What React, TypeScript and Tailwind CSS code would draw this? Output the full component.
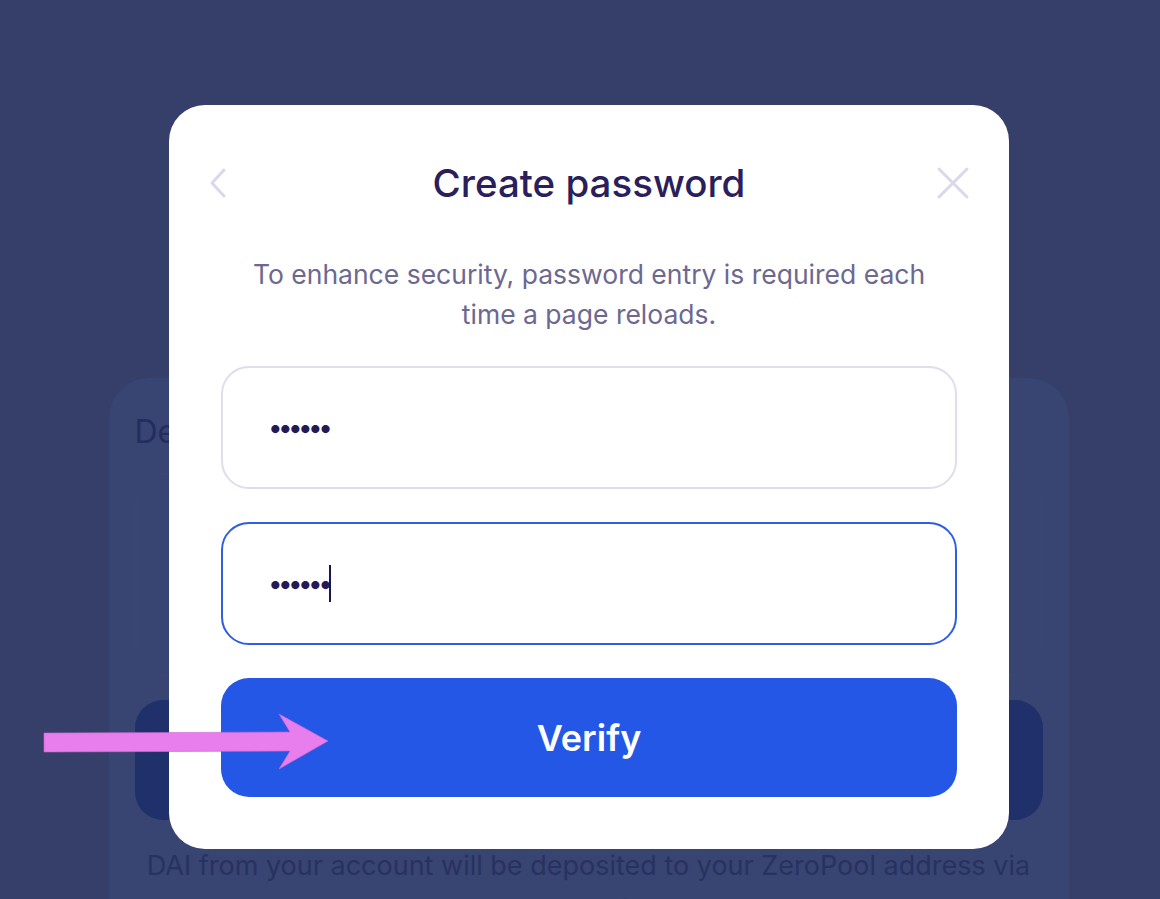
function BackgroundPage() {
  return (
    <div className="flex flex-col items-center pl-[17px] pt-[378px]">
      <div className="w-[960px] rounded-[40px] bg-[#384471] px-[26px] pt-[34px] pb-10">
        <h2 className="text-[32px] leading-[40px] text-[#242d5d]">Deposit</h2>
        <div className="mt-[21px] h-[203px] rounded-[28px] border-2 border-[#3a4573]" />
        <div className="mt-[24px] h-[120px] rounded-[28px] bg-[#20306a]" />
        <p className="mt-[24px] text-center text-[27px] leading-[44px] text-[#283260]">
          DAI from your account will be deposited to your ZeroPool address via
          <br />a permit.
        </p>
      </div>
    </div>
  )
}

function PasswordField({ focused }: { focused?: boolean }) {
  return (
    <div
      className={`flex h-[123px] items-center rounded-[28px] border-2 pl-[45px] ${
        focused ? "border-[#2f5ee3]" : "border-[#dfddee]"
      }`}
    >
      <span className="text-[26px] tracking-[-4.6px] text-[#231a55]">••••••</span>
      {focused && <span className="ml-[1px] h-[37px] w-[2px] bg-[#1c1650]" />}
    </div>
  )
}

function PasswordModal() {
  return (
    <div className="absolute inset-0 flex items-start justify-center pl-[18px] pt-[105px]">
      <div className="w-[840px] rounded-[36px] bg-white px-[52px] pt-[56px] pb-[52px]">
        {/* Header */}
        <div className="grid grid-cols-[1fr_auto_1fr] items-center">
          <svg className="-ml-[13px]" width="20" height="32" viewBox="0 0 20 32" fill="none">
            <path d="M16 3 L4 16 L16 29" stroke="#dad8ea" strokeWidth="3" strokeLinecap="round" strokeLinejoin="round" />
          </svg>
          <h1 className="text-[38.5px] font-medium leading-[44px] text-[#2a1f5c]">Create password</h1>
          <svg className="-mr-[13px] justify-self-end" width="34" height="34" viewBox="0 0 34 34" fill="none">
            <path d="M3 3 L31 31 M31 3 L3 31" stroke="#dad8ea" strokeWidth="3" strokeLinecap="round" />
          </svg>
        </div>

        <p className="mt-[49px] text-center text-[26.5px] leading-[40px] text-[#6c6890]">
          To enhance security, password entry is required each
          <br />
          time a page reloads.
        </p>

        <div className="mt-[32px] flex flex-col gap-[33px]">
          <PasswordField />
          <PasswordField focused />
          <button className="h-[119px] rounded-[28px] bg-[#2457e6] text-[36px] font-semibold text-white">
            Verify
          </button>
        </div>
      </div>
    </div>
  )
}

function PointerArrow() {
  return (
    <svg className="absolute left-0 top-0" width="340" height="780" viewBox="0 0 340 780">
      <path
        d="M44 733 L290 732 L279 714 L328 741 L279 769 L290 751 L44 752 Z"
        fill="#e87dee"
        stroke="#c866d0"
        strokeWidth="0.6"
      />
    </svg>
  )
}

export default function App() {
  return (
    <div className="relative h-[899px] w-full overflow-hidden bg-[#353f69] font-['Inter',sans-serif]">
      <BackgroundPage />
      <PasswordModal />
      <PointerArrow />
    </div>
  )
}
